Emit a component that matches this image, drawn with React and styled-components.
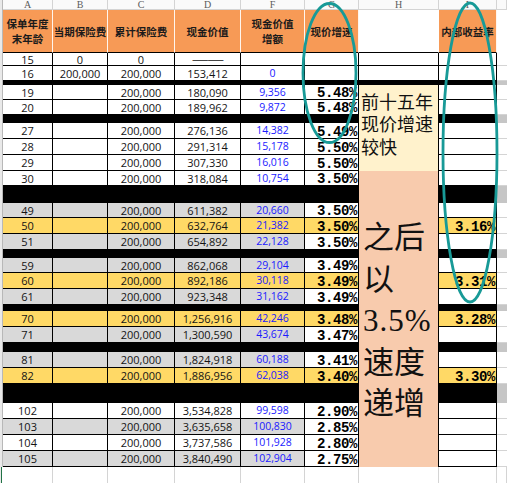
import React from 'react';
import styled, { createGlobalStyle, css } from 'styled-components';

const GlobalStyle = createGlobalStyle`
  html, body { margin: 0; padding: 0; background: #fff; }
  body { font-family: "Open Sans", "Noto Sans CJK SC", sans-serif; }
`;

const COLS = [3, 50, 55, 67, 66, 64, 54, 80, 58, 10];

const PAL = {
  orange: '#F79A56',
  yellow: '#FFD966',
  gray: '#D9D9D9',
  white: '#FFFFFF',
  cream: '#FFF2CC',
  salmon: '#F8CBAD',
  blue: '#1A1AFF',
  teal: '#189A97',
  grid: '#D4D4D4',
  band: '#000000',
  sideBand: '#C6C6C6',
};

const ROWS = [
  { h: 13, age: '15', cur: '0', total: '0', cv: '——', inc: '', g: '', fill: 'white', showH: true },
  { h: 15, age: '16', cur: '200,000', total: '200,000', cv: '153,412', inc: '0', g: '', fill: 'white', showH: true },
  { band: true, h: 4, showH: true },
  { h: 15, age: '19', total: '200,000', cv: '180,090', inc: '9,356', g: '5.48%', fill: 'white' },
  { h: 15, age: '20', total: '200,000', cv: '189,962', inc: '9,872', g: '5.48%', fill: 'white' },
  { band: true, h: 8 },
  { h: 16, age: '27', total: '200,000', cv: '276,136', inc: '14,382', g: '5.49%', fill: 'white' },
  { h: 16, age: '28', total: '200,000', cv: '291,314', inc: '15,178', g: '5.50%', fill: 'white' },
  { h: 16, age: '29', total: '200,000', cv: '307,330', inc: '16,016', g: '5.50%', fill: 'white' },
  { h: 15, age: '30', total: '200,000', cv: '318,084', inc: '10,754', g: '3.50%', fill: 'white' },
  { band: true, h: 17 },
  { h: 15, age: '49', total: '200,000', cv: '611,382', inc: '20,660', g: '3.50%', fill: 'gray' },
  { h: 16, age: '50', total: '200,000', cv: '632,764', inc: '21,382', g: '3.50%', irr: '3.16%', fill: 'yellow' },
  { h: 16, age: '51', total: '200,000', cv: '654,892', inc: '22,128', g: '3.50%', fill: 'gray' },
  { band: true, h: 8 },
  { h: 15, age: '59', total: '200,000', cv: '862,068', inc: '29,104', g: '3.49%', fill: 'gray' },
  { h: 16, age: '60', total: '200,000', cv: '892,186', inc: '30,118', g: '3.49%', irr: '3.31%', fill: 'yellow' },
  { h: 16, age: '61', total: '200,000', cv: '923,348', inc: '31,162', g: '3.49%', fill: 'gray' },
  { band: true, h: 6 },
  { h: 16, age: '70', total: '200,000', cv: '1,256,916', inc: '42,246', g: '3.48%', irr: '3.28%', fill: 'yellow' },
  { h: 16, age: '71', total: '200,000', cv: '1,300,590', inc: '43,674', g: '3.47%', fill: 'gray' },
  { band: true, h: 9 },
  { h: 16, age: '81', total: '200,000', cv: '1,824,918', inc: '60,188', g: '3.41%', fill: 'gray' },
  { h: 16, age: '82', total: '200,000', cv: '1,886,956', inc: '62,038', g: '3.40%', irr: '3.30%', fill: 'yellow' },
  { band: true, h: 19 },
  { h: 16, age: '102', total: '200,000', cv: '3,534,828', inc: '99,598', g: '2.90%', fill: 'white' },
  { h: 16, age: '103', total: '200,000', cv: '3,635,658', inc: '100,830', g: '2.85%', fill: 'gray' },
  { h: 16, age: '104', total: '200,000', cv: '3,737,586', inc: '101,928', g: '2.80%', fill: 'white' },
  { h: 16, age: '105', total: '200,000', cv: '3,840,490', inc: '102,904', g: '2.75%', fill: 'gray' },
];

const LAST_ROW = ROWS.length + 3; // blank row index in grid

const Frame = styled.div`
  position: relative;
  width: 507px;
  height: 483px;
  overflow: hidden;
  background: #fff;
`;

const Sheet = styled.div`
  display: grid;
  grid-template-columns: ${COLS.map((c) => `${c}px`).join(' ')};
  grid-template-rows: ${(p) => p.$rows};
  width: 507px;
  height: 483px;
`;

const RowStub = styled.div`
  grid-column: 1;
  grid-row: 1 / ${LAST_ROW};
  box-sizing: border-box;
  background: #e9e9e9;
  border-right: 1px solid #b8b8b8;
`;

const ActiveStub = styled.div`
  grid-column: 1;
  grid-row: ${LAST_ROW};
  box-sizing: border-box;
  border-left: 1px solid #e9e9e9;
  background: #217346;
  width: 2px;
`;

const ColLetter = styled.div`
  box-sizing: border-box;
  display: flex;
  align-items: flex-end;
  justify-content: center;
  overflow: hidden;
  background: #fafafa;
  border-right: 1px solid ${PAL.grid};
  border-bottom: 1px solid ${PAL.grid};
  font-family: "Liberation Serif", serif;
  font-size: 10px;
  line-height: 9px;
  color: #5c5c5c;
`;

const HeadCell = styled.div`
  box-sizing: border-box;
  display: flex;
  flex-direction: column;
  align-items: center;
  justify-content: center;
  background: ${(p) => p.$fill};
  border-right: 1px solid ${(p) => (p.$fill === PAL.white ? PAL.white : '#fff5ee')};
  border-bottom: 1px solid #000;
  font-family: "Noto Sans CJK SC", sans-serif;
  font-weight: 700;
  font-size: 10.5px;
  line-height: 15px;
  color: #1b1b1b;
  text-align: center;
  white-space: nowrap;
  overflow: hidden;
`;

const EdgeCell = styled.div`
  box-sizing: border-box;
  background: #fff;
  border-bottom: 1px solid ${(p) => (p.$clear ? 'transparent' : PAL.grid)};
`;

const Cell = styled.div`
  box-sizing: border-box;
  display: flex;
  align-items: center;
  justify-content: ${(p) => (p.$align === 'right' ? 'flex-end' : 'center')};
  padding-right: ${(p) => (p.$align === 'right' ? '1px' : '0')};
  background: ${(p) => p.$bg};
  border-right: 1px solid #000;
  border-bottom: 1px solid #000;
  overflow: hidden;
  white-space: nowrap;
  font-family: "Open Sans", "Noto Sans", sans-serif;
  font-size: 11px;
  line-height: 1;
  color: #141414;
  ${(p) =>
    p.$tone === 'blue' &&
    css`
      color: ${PAL.blue};
      font-size: 10.5px;
    `}
  ${(p) =>
    p.$tone === 'pct' &&
    css`
      font-family: "Liberation Mono", "DejaVu Sans Mono", monospace;
      font-weight: 700;
      font-size: 14px;
      letter-spacing: -0.4px;
      color: #000;
      padding-top: 2px;
    `}
`;

const Dash = styled.span`
  display: inline-block;
  font-family: "Liberation Sans", sans-serif;
  font-size: 11px;
  line-height: 9px;
  transform: scaleX(1.4);
`;

const BandCell = styled.div`
  grid-column: span ${(p) => p.$span || 1};
  background: ${(p) => p.$color};
`;

const Note = styled.div`
  grid-column: 8;
  grid-row: ${(p) => p.$rows};
  box-sizing: border-box;
  display: flex;
  flex-direction: column;
  justify-content: center;
  align-items: flex-start;
  background: ${(p) => p.$bg};
  border-right: 1px solid #000;
  padding: ${(p) => p.$pad};
  font-family: "Liberation Serif", "Noto Sans CJK SC", serif;
  font-size: ${(p) => p.$size}px;
  line-height: ${(p) => p.$lh}px;
  color: #111;
  white-space: nowrap;
`;

const NoteLine = styled.span`
  letter-spacing: ${(p) => (p.$wide ? '1px' : '0')};
`;

const BlankCell = styled.div`
  box-sizing: border-box;
  background: #fff;
  border-right: 1px solid ${PAL.grid};
`;

const Overlay = styled.svg`
  position: absolute;
  left: 0;
  top: 0;
  width: 507px;
  height: 483px;
  pointer-events: none;
`;

const fillOf = (f) => PAL[f];

function DataRow({ row }) {
  const base = fillOf(row.fill);
  const accent = row.fill === 'yellow' ? PAL.yellow : PAL.white;
  return (
    <>
      <Cell $bg={base}>{row.age}</Cell>
      <Cell $bg={base}>{row.cur || ''}</Cell>
      <Cell $bg={base}>{row.total}</Cell>
      <Cell $bg={base}>{row.cv === '——' ? <Dash>——</Dash> : row.cv}</Cell>
      <Cell $bg={base} $tone="blue">{row.inc}</Cell>
      <Cell $bg={accent} $tone="pct" $align="right">{row.g}</Cell>
      {row.showH && <Cell $bg={PAL.white} />}
      <Cell $bg={accent} $tone="pct" $align="right">{row.irr || ''}</Cell>
      <EdgeCell />
    </>
  );
}

function BandRow({ row }) {
  return (
    <>
      <BandCell $span={6} $color={PAL.band} />
      {row.showH && <BandCell $color={PAL.band} />}
      <BandCell $color={PAL.band} />
      <BandCell $color={PAL.sideBand} />
    </>
  );
}

const LETTERS = ['A', 'B', 'C', 'D', 'F', 'G', 'H', 'I', ''];

const HEADERS = [
  { lines: ['保单年度', '末年龄'], fill: PAL.orange },
  { lines: ['当期保险费'], fill: PAL.orange },
  { lines: ['累计保险费'], fill: PAL.orange },
  { lines: ['现金价值'], fill: PAL.orange },
  { lines: ['现金价值', '增额'], fill: PAL.orange },
  { lines: ['现价增速'], fill: PAL.orange },
  { lines: [], fill: PAL.white },
  { lines: ['内部收益率'], fill: PAL.orange },
];

export default function App() {
  const rowsTemplate = `10px 43px ${ROWS.map((r) => `${r.h}px`).join(' ')} 16px`;
  return (
    <Frame>
      <GlobalStyle />
      <Sheet $rows={rowsTemplate}>
        <RowStub />
        <ActiveStub />
        <Note $rows="6 / 12" $bg={PAL.cream} $size={18} $lh={22.5} $pad="0 0 5px 2px">
          <NoteLine>前十五年</NoteLine>
          <NoteLine>现价增速</NoteLine>
          <NoteLine>较快</NoteLine>
        </Note>
        <Note $rows={`12 / ${LAST_ROW}`} $bg={PAL.salmon} $size={31} $lh={41.5} $pad="4px 0 0 4px">
          <NoteLine>之后</NoteLine>
          <NoteLine>以</NoteLine>
          <NoteLine $wide>3.5%</NoteLine>
          <NoteLine>速度</NoteLine>
          <NoteLine>递增</NoteLine>
        </Note>

        {LETTERS.map((l, i) => (
          <ColLetter key={`l${i}`}>{l}</ColLetter>
        ))}

        {HEADERS.map((h, i) => (
          <HeadCell key={`h${i}`} $fill={h.fill}>
            {h.lines.map((t) => (
              <span key={t}>{t}</span>
            ))}
          </HeadCell>
        ))}
        <EdgeCell $clear />

        {ROWS.map((row, i) =>
          row.band ? <BandRow key={`r${i}`} row={row} /> : <DataRow key={`r${i}`} row={row} />
        )}

        {Array.from({ length: 9 }).map((_, i) => (
          <BlankCell key={`b${i}`} />
        ))}
      </Sheet>
      <Overlay viewBox="0 0 507 483">
        <ellipse cx="329.5" cy="73" rx="26.5" ry="69.5" fill="none" stroke={PAL.teal} strokeWidth="2.8" />
        <ellipse cx="470" cy="152.5" rx="27" ry="149.5" fill="none" stroke={PAL.teal} strokeWidth="2.8" />
      </Overlay>
    </Frame>
  );
}
